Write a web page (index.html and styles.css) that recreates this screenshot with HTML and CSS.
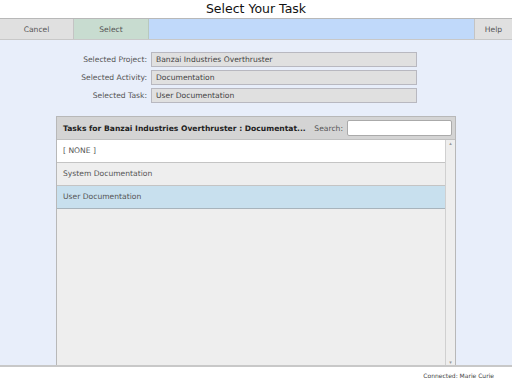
FILE: index.html
```html
<!DOCTYPE html>
<html lang="en">
<head>
    <meta charset="UTF-8">
    <title>Select Your Task</title>
    <link rel="stylesheet" href="styles.css">
</head>
<body>

    <header class="title">Select Your Task</header>

    <nav class="toolbar">
        <button class="tb-btn cancel">Cancel</button>
        <button class="tb-btn select">Select</button>
        <div class="tb-fill"></div>
        <button class="tb-btn help">Help</button>
    </nav>

    <div class="main">
        <!-- current selection -->
        <div class="fields">
            <label>Selected Project:</label>
            <div class="field">Banzai Industries Overthruster</div>
            <label>Selected Activity:</label>
            <div class="field">Documentation</div>
            <label>Selected Task:</label>
            <div class="field">User Documentation</div>
        </div>

        <!-- task list -->
        <section class="panel">
            <div class="panel-head">
                <h2>Tasks for Banzai Industries Overthruster : Documentat...</h2>
                <span class="search-label">Search:</span>
                <input type="text" class="search">
            </div>
            <div class="panel-body">
                <ul class="task-list">
                    <li class="none">[ NONE ]</li>
                    <li>System Documentation</li>
                    <li class="active">User Documentation</li>
                </ul>
                <div class="scrollbar">
                    <span class="arrow">&#9652;</span>
                    <span class="arrow">&#9662;</span>
                </div>
            </div>
        </section>
    </div>

    <footer class="status">Connected: Marie Curie</footer>

</body>
</html>
```

FILE: styles.css
```css
html, body {
    height: 100%;
}

body {
    margin: 0;
    font-family: "DejaVu Sans", Verdana, sans-serif;
    font-size: 7.6px;
    color: #444;
    background-color: #fff;
    display: flex;
    flex-direction: column;
}

.title {
    height: 18px;
    line-height: 18px;
    text-align: center;
    font-size: 12.5px;
    color: #111;
}

.toolbar {
    display: flex;
    height: 20px;
    border-top: 1px solid #b8b8b8;
    border-bottom: 1px solid #c8c8c8;
}

.tb-btn {
    font-family: inherit;
    font-size: 7.6px;
    color: #555;
    border: none;
    padding: 0;
    margin: 0;
}

.cancel {
    width: 74px;
    background-color: #e0e0e0;
    border-right: 1px solid #c4c4c4;
}

.select {
    width: 75px;
    background-color: #c8dcd0;
    border-right: 1px solid #b8c8be;
}

.tb-fill {
    flex: 1;
    background-color: #c0d9fa;
}

.help {
    width: 38px;
    background-color: #e0e0e0;
    border-left: 1px solid #c4c4c4;
}

.main {
    flex: 1;
    background-color: #e8eefa;
    padding: 12px 56px 0 56px;
    display: flex;
    flex-direction: column;
    border-bottom: 2px solid #c8c8c8;
}

.fields {
    display: grid;
    grid-template-columns: 91px 266px;
    column-gap: 4px;
    row-gap: 3px;
    align-items: center;
}

.fields label {
    text-align: right;
    color: #555;
}

.field {
    height: 13px;
    line-height: 13px;
    padding-left: 4px;
    background-color: #e0e0e0;
    border: 1px solid #b8b8c0;
    color: #444;
}

.panel {
    flex: 1;
    margin-top: 13px;
    width: 398px;
    border: 1px solid #b8b8b8;
    border-bottom: none;
    display: flex;
    flex-direction: column;
    background-color: #eee;
}

.panel-head {
    display: flex;
    align-items: center;
    height: 22px;
    background-color: #d4d4d4;
    border-bottom: 1px solid #c0c0c0;
    padding: 0 3px 0 6px;
}

.panel-head h2 {
    flex: 1;
    margin: 0;
    font-size: 7.6px;
    color: #222;
}

.search-label {
    color: #555;
    margin-right: 4px;
}

.search {
    width: 103px;
    height: 14px;
    padding: 0;
    border: 1px solid #aaa;
    border-radius: 2px;
    background-color: #fff;
}

.panel-body {
    flex: 1;
    display: flex;
}

.task-list {
    flex: 1;
    list-style: none;
    margin: 0;
    padding: 0;
}

.task-list li {
    height: 22px;
    line-height: 22px;
    padding-left: 6px;
    background-color: #eee;
    border-bottom: 1px solid #c4c4c4;
    color: #555;
}

.task-list li.none {
    background-color: #fff;
}

.task-list li.active {
    background-color: #c8e0ee;
    border-bottom: 1px solid #a8b4bc;
}

.scrollbar {
    width: 9px;
    border-left: 1px solid #d0d0d0;
    background-color: #eee;
    display: flex;
    flex-direction: column;
    justify-content: space-between;
    align-items: center;
    font-size: 5px;
    color: #999;
}

.status {
    height: 17px;
    line-height: 17px;
    text-align: right;
    padding-right: 18px;
    font-size: 6px;
    color: #444;
}
```
